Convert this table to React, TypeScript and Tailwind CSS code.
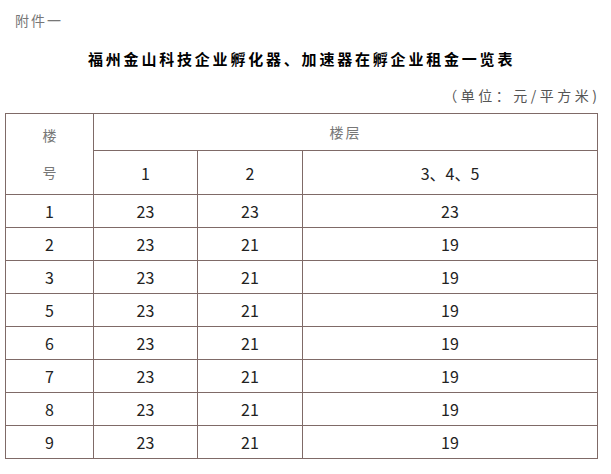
import React from 'react';

const rows = [
  ['1', '23', '23', '23'],
  ['2', '23', '21', '19'],
  ['3', '23', '21', '19'],
  ['5', '23', '21', '19'],
  ['6', '23', '21', '19'],
  ['7', '23', '21', '19'],
  ['8', '23', '21', '19'],
  ['9', '23', '21', '19'],
];

const font = { fontFamily: '"Noto Sans CJK SC", "Noto Sans", sans-serif' };
const cell = 'border border-[#7f6a67] text-center p-0';

export default function App() {
  return (
    <div className="w-[611px] h-[474px] bg-white text-[#222]" style={font}>
      <div className="pl-[15px] pt-[11px] text-[14px] leading-[18px] text-[#777] tracking-[2px]">附件一</div>
      <div className="mt-[20px] pl-[88px] text-[15px] leading-[20px] font-bold tracking-[2.8px] text-black">
        福州金山科技企业孵化器、加速器在孵企业租金一览表
      </div>
      <div className="mt-[16px] pr-[14px] text-right text-[14px] leading-[20px] text-[#555] tracking-[3.5px]">
        （单位：元/平方米<span className="tracking-normal">)</span>
      </div>
      <table className="ml-[5px] mt-[8px] border-collapse table-fixed w-[592px] text-[16px]">
        <colgroup>
          <col className="w-[88px]" />
          <col className="w-[104px]" />
          <col className="w-[105px]" />
          <col className="w-[295px]" />
        </colgroup>
        <tbody>
          <tr className="h-[37px]">
            <td rowSpan={2} className={cell + ' text-[14px] text-[#777] leading-[37px]'}>
              <div>楼</div>
              <div>号</div>
            </td>
            <td colSpan={3} className={cell + ' text-[14px] text-[#777] tracking-[2px]'}>楼层</td>
          </tr>
          <tr className="h-[44px]">
            <td className={cell}>1</td>
            <td className={cell}>2</td>
            <td className={cell}>3、4、5</td>
          </tr>
          {rows.map((r) => (
            <tr key={r[0]} className="h-[33px]">
              {r.map((v, i) => (
                <td key={i} className={cell}>{v}</td>
              ))}
            </tr>
          ))}
        </tbody>
      </table>
    </div>
  );
}
